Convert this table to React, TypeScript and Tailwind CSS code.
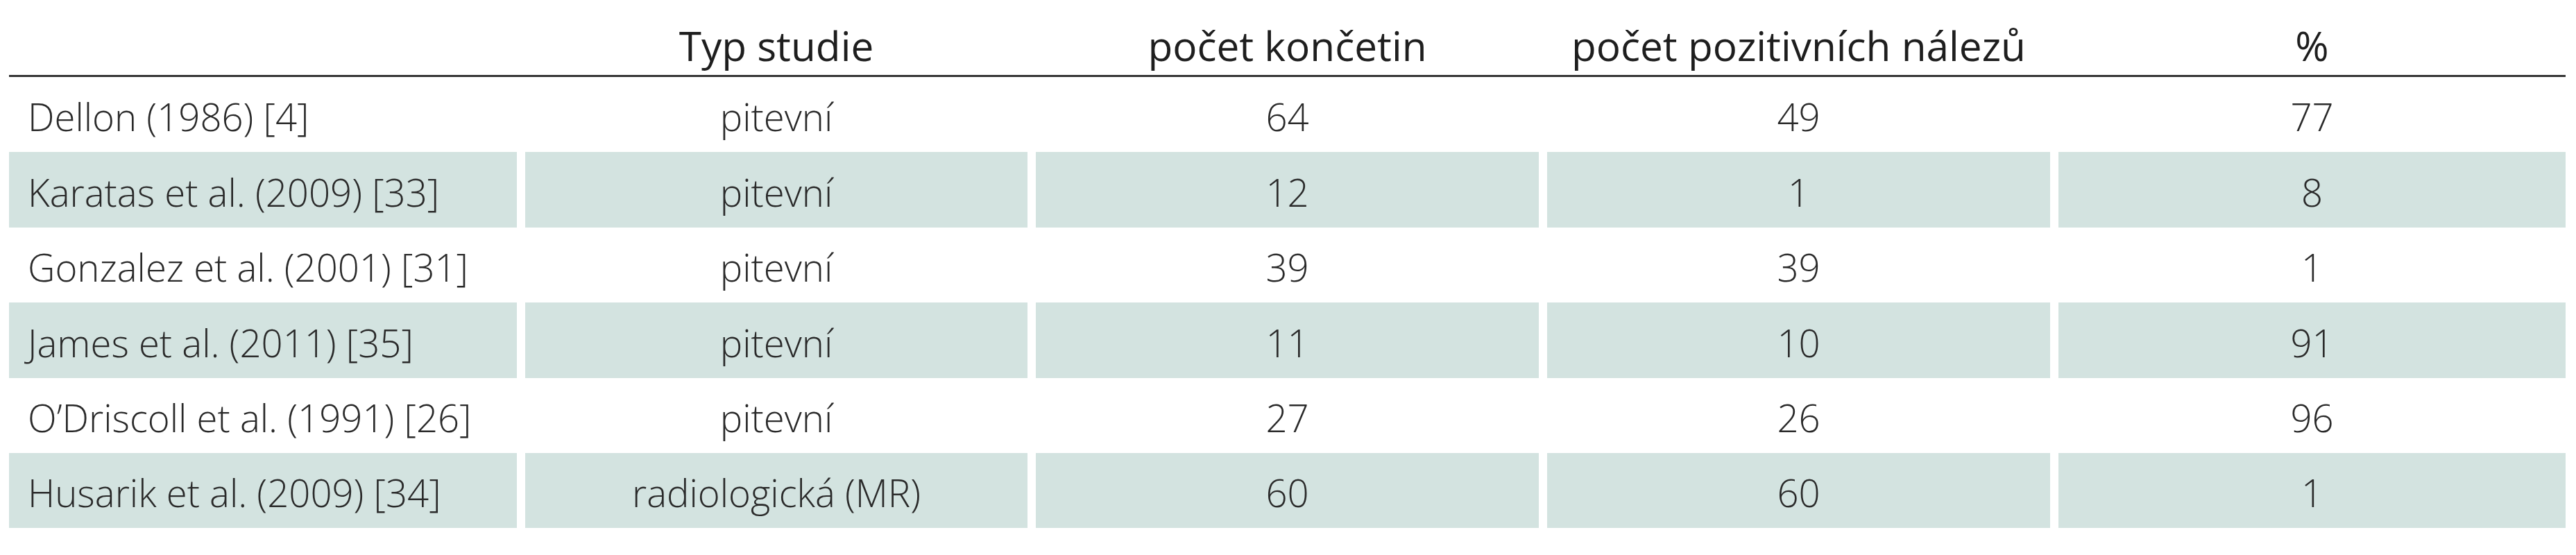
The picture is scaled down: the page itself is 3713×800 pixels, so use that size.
import React from 'react';

interface Study {
  author: string;
  type: string;
  limbs: string;
  positive: string;
  percent: string;
}

const studies: Study[] = [
  { author: 'Dellon (1986) [4]', type: 'pitevní', limbs: '64', positive: '49', percent: '77' },
  { author: 'Karatas et al. (2009) [33]', type: 'pitevní', limbs: '12', positive: '1', percent: '8' },
  { author: 'Gonzalez et al. (2001) [31]', type: 'pitevní', limbs: '39', positive: '39', percent: '1' },
  { author: 'James et al. (2011) [35]', type: 'pitevní', limbs: '11', positive: '10', percent: '91' },
  { author: 'O\u2019Driscoll et al. (1991) [26]', type: 'pitevní', limbs: '27', positive: '26', percent: '96' },
  { author: 'Husarik et al. (2009) [34]', type: 'radiologická (MR)', limbs: '60', positive: '60', percent: '1' },
];

const headers = ['', 'Typ studie', 'počet končetin', 'počet pozitivních nálezů', '%'];

const gridCols = 'grid grid-cols-[732px_724px_725px_725px_731px] gap-x-[12px]';

const App: React.FC = () => {
  return (
    <div className="w-[3713px] h-[800px] bg-white pl-[13px] pr-[15px]">
      {/* header */}
      <div className={`${gridCols} h-[111px] border-b-[3px] border-[#333] items-end pb-[14px]`}>
        {headers.map((h, i) => (
          <div
            key={i}
            className="text-center text-[58.5px] leading-none whitespace-nowrap text-[#1e1e1e] font-['Open_Sans',sans-serif]"
          >
            {h}
          </div>
        ))}
      </div>

      {/* rows */}
      {studies.map((s, idx) => {
        const banded = idx % 2 === 1;
        const cell = `flex items-center h-[108.4px] pt-[7px] whitespace-nowrap ${banded ? 'bg-[#d3e3e0]' : ''}`;
        return (
          <div
            key={s.author}
            className={`${gridCols} text-[54.5px] leading-none font-light text-[#2a2a2a] font-['Open_Sans',sans-serif]`}
          >
            <div className={`${cell} pl-[27px]`}>{s.author}</div>
            <div className={`${cell} justify-center`}>{s.type}</div>
            <div className={`${cell} justify-center`}>{s.limbs}</div>
            <div className={`${cell} justify-center`}>{s.positive}</div>
            <div className={`${cell} justify-center`}>{s.percent}</div>
          </div>
        );
      })}
    </div>
  );
};

export default App;
